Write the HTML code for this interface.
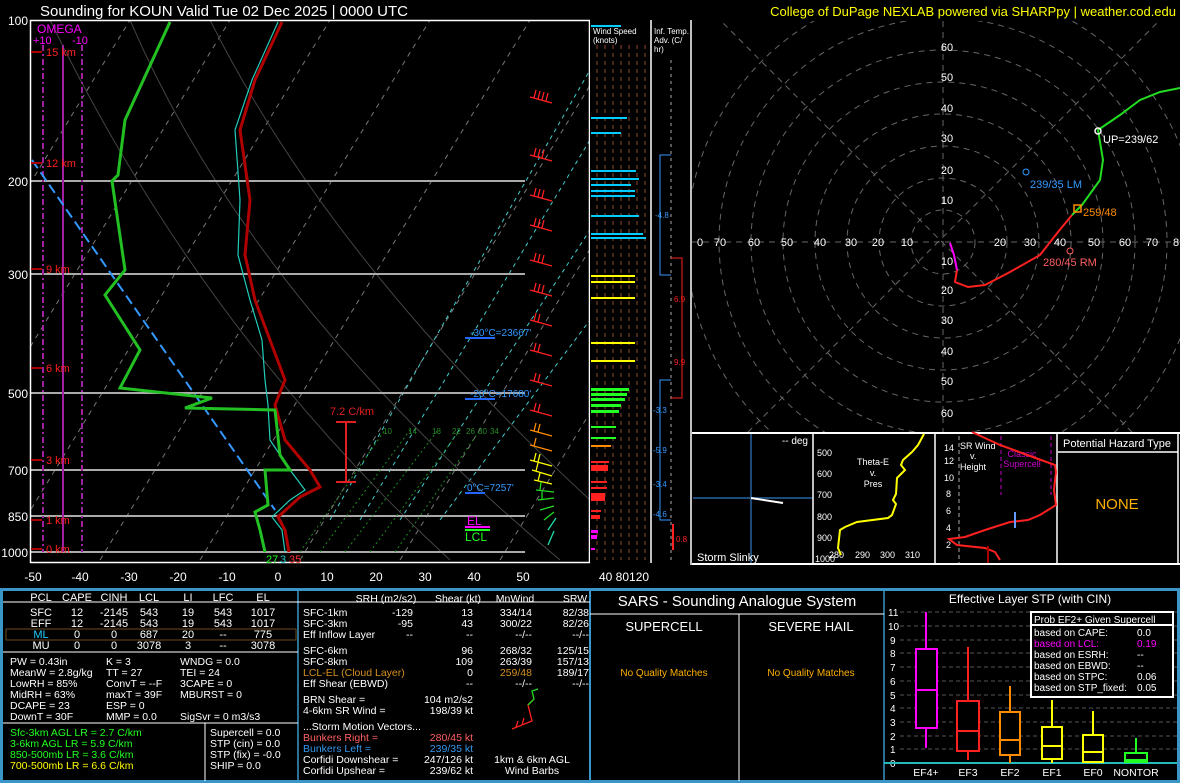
<!DOCTYPE html>
<html><head><meta charset="utf-8"><style>
html,body{margin:0;padding:0;background:#000;}
svg{display:block;font-family:"Liberation Sans",sans-serif;}
</style></head><body>
<svg width="1180" height="783" viewBox="0 0 1180 783" xmlns="http://www.w3.org/2000/svg">
<rect width="1180" height="783" fill="#000"/>
<text x="40" y="16" fill="#fff" font-size="15">Sounding for KOUN Valid  Tue 02 Dec 2025 | 0000 UTC</text>
<text x="1176" y="16" fill="#ffff00" font-size="13" text-anchor="end">College of DuPage NEXLAB powered via SHARPpy | weather.cod.edu</text>

<g>
<clipPath id="sk"><rect x="31" y="21" width="558" height="541"/></clipPath>
<g clip-path="url(#sk)">
 <g stroke="#777" stroke-width="1" stroke-dasharray="5,5">
  <line x1="-300" y1="560" x2="30" y2="20"/><line x1="-200" y1="560" x2="130" y2="20"/>
  <line x1="-100" y1="560" x2="230" y2="20"/><line x1="0" y1="560" x2="330" y2="20"/>
  <line x1="100" y1="560" x2="430" y2="20"/><line x1="200" y1="560" x2="530" y2="20"/>
  <line x1="300" y1="560" x2="630" y2="20"/><line x1="400" y1="560" x2="730" y2="20"/>
  <line x1="500" y1="560" x2="830" y2="20"/>
 </g>
 <g stroke="#4cc" stroke-width="1" stroke-dasharray="4,4">
  <line x1="330" y1="520" x2="590" y2="70"/><line x1="360" y1="520" x2="590" y2="140"/>
  <line x1="400" y1="520" x2="590" y2="230"/><line x1="440" y1="520" x2="590" y2="320"/>
 </g>
 <g stroke="#444" stroke-width="1" fill="none">
  <path d="M130 20 Q250 300 560 560"/><path d="M50 20 Q200 330 450 560"/><path d="M210 20 Q330 260 590 500"/>
 </g>
 <g stroke="#aaa" stroke-width="2">
  <line x1="31" y1="181" x2="525" y2="181"/><line x1="31" y1="274" x2="525" y2="274"/>
  <line x1="31" y1="393" x2="525" y2="393"/><line x1="31" y1="470" x2="525" y2="470"/>
  <line x1="31" y1="516" x2="525" y2="516"/><line x1="31" y1="552" x2="525" y2="552"/>
 </g>
 <line x1="63" y1="45" x2="63" y2="552" stroke="#a020a0" stroke-width="2"/>
 <line x1="43" y1="45" x2="43" y2="552" stroke="#a020a0" stroke-width="2" stroke-dasharray="6,3,2,3"/>
 <line x1="82" y1="45" x2="82" y2="552" stroke="#a020a0" stroke-width="2" stroke-dasharray="6,3,2,3"/>
 <line x1="32" y1="160" x2="275" y2="510" stroke="#3399ff" stroke-width="2" stroke-dasharray="10,5"/>
 <g stroke="#228b22" stroke-width="1" stroke-dasharray="2,3">
  <line x1="300" y1="552" x2="385" y2="430"/><line x1="320" y1="552" x2="410" y2="430"/><line x1="345" y1="552" x2="438" y2="430"/>
  <line x1="370" y1="552" x2="460" y2="430"/><line x1="395" y1="552" x2="480" y2="430"/>
 </g>
 <polyline fill="none" stroke="#2cb" stroke-width="1.2" points="285,552 282,530 272,517 290,500 305,490 290,470 270,440 268,405 265,380 262,340 250,300 238,255 240,200 235,130 252,80 278,22"/>
 <polyline fill="none" stroke="#b00000" stroke-width="3" points="289,552 285,530 278,517 300,497 320,487 310,470 285,440 275,405 285,380 270,340 255,300 245,255 250,200 240,130 255,80 282,22"/>
 <polyline fill="none" stroke="#22c022" stroke-width="3" points="265,552 260,530 255,512 268,505 265,470 290,470 280,455 275,410 185,408 212,398 120,388 140,350 105,295 125,270 112,181 118,175 125,120 170,22"/>
</g>
<rect x="30.5" y="20.5" width="559" height="542" fill="none" stroke="#fff" stroke-width="1.5"/>
<g fill="#fff" font-size="12" text-anchor="end">
 <text x="28" y="25">100</text><text x="28" y="186">200</text><text x="28" y="279">300</text>
 <text x="28" y="398">500</text><text x="28" y="475">700</text><text x="28" y="521">850</text><text x="28" y="557">1000</text>
</g>
<g fill="#fff" font-size="12" text-anchor="middle">
 <text x="33" y="581">-50</text><text x="80" y="581">-40</text><text x="129" y="581">-30</text><text x="178" y="581">-20</text>
 <text x="227" y="581">-10</text><text x="278" y="581">0</text><text x="327" y="581">10</text><text x="376" y="581">20</text>
 <text x="425" y="581">30</text><text x="474" y="581">40</text><text x="523" y="581">50</text>
</g>
<text x="599" y="581" fill="#fff" font-size="12">40  80120</text>
<text x="37" y="33" fill="#ff00ff" font-size="12">OMEGA</text>
<text x="33" y="44" fill="#ff00ff" font-size="11">+10</text><text x="72" y="44" fill="#ff00ff" font-size="11">-10</text>
<g fill="#ff2020" font-size="11">
 <text x="46" y="56">15 km</text><text x="46" y="167">12 km</text><text x="46" y="273">9 km</text>
 <text x="46" y="372">6 km</text><text x="46" y="464">3 km</text><text x="46" y="524">1 km</text><text x="46" y="553">0 km</text>
</g>
<g stroke="#a00" stroke-width="2"><line x1="31" y1="52" x2="42" y2="52"/><line x1="31" y1="163" x2="42" y2="163"/><line x1="31" y1="269" x2="42" y2="269"/><line x1="31" y1="368" x2="42" y2="368"/><line x1="31" y1="460" x2="42" y2="460"/><line x1="31" y1="520" x2="42" y2="520"/><line x1="31" y1="549" x2="42" y2="549"/></g>
<g stroke="#e02020" stroke-width="2"><line x1="346" y1="422" x2="346" y2="482"/><line x1="336" y1="422" x2="356" y2="422"/><line x1="336" y1="482" x2="356" y2="482"/></g>
<text x="330" y="415" fill="#e02020" font-size="11">7.2 C/km</text>
<g fill="#228b22" font-size="8"><text x="383" y="434">10</text><text x="408" y="434">14</text><text x="432" y="434">18</text><text x="452" y="434">22</text><text x="466" y="434">26</text><text x="478" y="434">30</text><text x="490" y="434">34</text></g>
<g fill="#3399ff" font-size="10"><text x="470" y="336">-30°C=23667'</text><text x="470" y="397">-20°C=17680'</text><text x="467" y="491">0°C=7257'</text></g>
<g stroke="#2266ff" stroke-width="2"><line x1="465" y1="338" x2="495" y2="338"/><line x1="465" y1="399" x2="495" y2="399"/><line x1="465" y1="493" x2="485" y2="493"/></g>
<text x="467" y="525" fill="#ff00ff" font-size="12">EL</text><line x1="465" y1="527" x2="490" y2="527" stroke="#ff00ff" stroke-width="2"/>
<text x="465" y="541" fill="#22ff22" font-size="12">LCL</text><line x1="465" y1="530" x2="490" y2="530" stroke="#22ff22" stroke-width="2"/>
<text x="266" y="563" fill="#22ff22" font-size="11">27</text><text x="280" y="563" fill="#22cccc" font-size="11">3</text><text x="289" y="563" fill="#ff3030" font-size="11">35</text>
<g stroke="#ff2020" stroke-width="1.3" fill="none">
 <path d="M530 97 l22 6 M534 98 l2 -8 M538 99 l2 -8 M542 100 l2 -8 M546 101 l2 -8"/>
 <path d="M530 155 l22 6 M534 156 l2 -8 M538 157 l2 -8 M542 158 l2 -8"/>
 <path d="M530 195 l22 6 M534 196 l2 -8 M538 197 l2 -8 M542 198 l2 -8"/>
 <path d="M530 225 l22 6 M534 226 l2 -8 M538 227 l2 -8 M542 228 l2 -8"/>
 <path d="M530 260 l22 6 M534 261 l2 -8 M538 262 l2 -8 M542 263 l2 -8"/>
 <path d="M530 290 l22 6 M534 291 l2 -8 M538 292 l2 -8 M542 293 l2 -8"/>
 <path d="M530 320 l22 6 M534 321 l2 -8 M538 322 l2 -8"/>
 <path d="M530 350 l22 6 M534 351 l2 -8 M538 352 l2 -8"/>
 <path d="M530 380 l22 6 M534 381 l2 -8 M538 382 l2 -8"/>
 <path d="M530 410 l22 6 M534 411 l2 -8 M538 412 l2 -8"/>
</g>
<g stroke="#ff8c00" stroke-width="1.3" fill="none"><path d="M530 430 l22 6 M534 431 l2 -8 M538 432 l2 -8"/><path d="M530 445 l22 6 M534 446 l2 -8"/></g>
<g stroke="#ffff00" stroke-width="1.3" fill="none"><path d="M530 460 l22 6 M534 461 l2 -8 M538 462 l2 -8"/><path d="M532 470 l20 6 M536 471 l2 -8"/><path d="M534 480 l18 4 M538 481 l2 -8"/></g>
<g stroke="#22dd22" stroke-width="1.3" fill="none"><path d="M536 490 l18 2 M540 490 l1 -8"/><path d="M538 500 l16 -2 M542 500 l0 -8"/><path d="M540 510 l14 -4"/><path d="M544 520 l10 -8"/></g>
<g stroke="#22ddaa" stroke-width="1.3" fill="none"><path d="M548 530 l8 -12"/><path d="M548 545 l6 -14"/></g>
</g>

<rect x="590" y="20" width="60" height="543" fill="#000"/>
<text x="593" y="34" fill="#fff" font-size="8">Wind Speed</text><text x="593" y="43" fill="#fff" font-size="8">(knots)</text>
<g stroke="#8b4a2b" stroke-width="1" stroke-dasharray="4,4"><line x1="597" y1="45" x2="597" y2="560"/><line x1="605" y1="45" x2="605" y2="560"/><line x1="613" y1="45" x2="613" y2="560"/><line x1="621" y1="45" x2="621" y2="560"/><line x1="629" y1="45" x2="629" y2="560"/><line x1="637" y1="45" x2="637" y2="560"/><line x1="645" y1="45" x2="645" y2="560"/></g>
<g fill="#00ccff"><rect x="591" y="25" width="30" height="2"/><rect x="591" y="117" width="36" height="2"/><rect x="591" y="132" width="30" height="2"/><rect x="591" y="170" width="45" height="2"/><rect x="591" y="178" width="48" height="2"/><rect x="591" y="184" width="40" height="2"/><rect x="591" y="190" width="44" height="2"/><rect x="591" y="195" width="44" height="2"/><rect x="591" y="215" width="48" height="2"/><rect x="591" y="233" width="52" height="2"/><rect x="591" y="237" width="55" height="2"/></g>
<g fill="#ffff00"><rect x="591" y="275" width="44" height="2"/><rect x="591" y="281" width="44" height="2"/><rect x="591" y="297" width="44" height="2"/><rect x="591" y="342" width="44" height="2"/><rect x="591" y="360" width="44" height="2"/></g>
<g fill="#22ff22"><rect x="591" y="388" width="38" height="3"/><rect x="591" y="393" width="36" height="3"/><rect x="591" y="398" width="34" height="3"/><rect x="591" y="404" width="30" height="3"/><rect x="591" y="410" width="28" height="3"/><rect x="591" y="426" width="25" height="2"/><rect x="591" y="437" width="25" height="2"/></g>
<g fill="#ff8c00"><rect x="591" y="445" width="20" height="2"/></g>
<g fill="#ff2020"><rect x="591" y="461" width="18" height="2"/><rect x="591" y="465" width="17" height="6"/><rect x="591" y="481" width="16" height="2"/><rect x="591" y="487" width="16" height="2"/><rect x="591" y="493" width="14" height="8"/><rect x="591" y="510" width="10" height="2"/><rect x="591" y="515" width="9" height="4"/></g>
<g fill="#ff00ff"><rect x="591" y="530" width="7" height="3"/><rect x="591" y="535" width="6" height="4"/><rect x="591" y="548" width="4" height="2"/></g>
<line x1="651" y1="20" x2="651" y2="563" stroke="#fff" stroke-width="1.5"/>
<text x="654" y="34" fill="#fff" font-size="8">Inf. Temp.</text><text x="654" y="43" fill="#fff" font-size="8">Adv. (C/</text><text x="654" y="52" fill="#fff" font-size="8">hr)</text>
<line x1="671" y1="60" x2="671" y2="560" stroke="#aaa" stroke-dasharray="3,4"/>
<path d="M671 155 h-11 v120 h11" fill="none" stroke="#3399ff"/><text x="655" y="218" fill="#3399ff" font-size="8">-4.8</text>
<path d="M671 258 h11 v140 h-11" fill="none" stroke="#ff2020"/><text x="674" y="302" fill="#ff2020" font-size="8">6.9</text><text x="674" y="365" fill="#ff2020" font-size="8">9.9</text>
<path d="M671 380 h-11 v140 h11" fill="none" stroke="#3399ff"/><text x="653" y="413" fill="#3399ff" font-size="8">-3.3</text><text x="653" y="453" fill="#3399ff" font-size="8">-5.9</text><text x="653" y="487" fill="#3399ff" font-size="8">-3.4</text><text x="653" y="517" fill="#3399ff" font-size="8">-4.6</text>
<line x1="673" y1="524" x2="673" y2="550" stroke="#ff2020" stroke-width="2"/><text x="676" y="542" fill="#ff2020" font-size="8">0.8</text>
<line x1="691" y1="20" x2="691" y2="565" stroke="#fff" stroke-width="1.5"/>

<g>
<clipPath id="hc"><rect x="692" y="21" width="488" height="411"/></clipPath>
<g clip-path="url(#hc)" fill="none" stroke="#666" stroke-dasharray="6,5">
 <circle cx="943" cy="242" r="32"/><circle cx="943" cy="242" r="64"/><circle cx="943" cy="242" r="96"/><circle cx="943" cy="242" r="128"/><circle cx="943" cy="242" r="160"/><circle cx="943" cy="242" r="192"/><circle cx="943" cy="242" r="224"/><circle cx="943" cy="242" r="256"/>
 <line x1="692" y1="242" x2="1180" y2="242"/><line x1="943" y1="21" x2="943" y2="432"/>
 <line x1="700" y1="0" x2="1180" y2="480"/><line x1="1180" y1="0" x2="700" y2="480"/>
</g>
<g fill="#fff" font-size="11" text-anchor="middle">
 <text x="947" y="51">60</text><text x="947" y="81">50</text><text x="947" y="112">40</text><text x="947" y="142">30</text><text x="947" y="174">20</text><text x="947" y="204">10</text>
 <text x="947" y="265">10</text><text x="947" y="294">20</text><text x="947" y="324">30</text><text x="947" y="355">40</text><text x="947" y="385">50</text><text x="947" y="417">60</text>
 <text x="700" y="246">0</text><text x="720" y="246">70</text><text x="754" y="246">60</text><text x="787" y="246">50</text><text x="820" y="246">40</text><text x="851" y="246">30</text><text x="878" y="246">20</text><text x="907" y="246">10</text>
 <text x="1000" y="246">20</text><text x="1030" y="246">30</text><text x="1060" y="246">40</text><text x="1094" y="246">50</text><text x="1125" y="246">60</text><text x="1152" y="246">70</text><text x="1176" y="246">8</text>
</g>
<polyline fill="none" stroke="#ff00ff" stroke-width="2" points="950,243 954,255 957,270"/>
<polyline fill="none" stroke="#ff2020" stroke-width="2" points="957,270 955,282 968,287 985,285 1010,272 1040,255 1058,232 1072,215"/>
<polyline fill="none" stroke="#22dd22" stroke-width="2" points="1072,215 1082,205 1100,180 1103,160 1098,130 1120,115 1140,100 1160,92 1180,88"/>
<circle cx="1098" cy="131" r="3" fill="none" stroke="#fff" stroke-width="1.5"/><text x="1103" y="143" fill="#fff" font-size="11">UP=239/62</text>
<circle cx="1026" cy="172" r="3" fill="none" stroke="#3399ff"/><text x="1030" y="188" fill="#3399ff" font-size="11">239/35 LM</text>
<rect x="1074" y="205" width="7" height="7" fill="none" stroke="#ff8c00" stroke-width="1.5"/><text x="1083" y="216" fill="#ff8c00" font-size="11">259/48</text>
<circle cx="1070" cy="251" r="3" fill="none" stroke="#ff6060"/><text x="1043" y="266" fill="#ff6060" font-size="11">280/45 RM</text>
</g>
<rect x="692" y="432" width="488" height="2" fill="#fff"/>
<line x1="692" y1="564" x2="1180" y2="564" stroke="#fff" stroke-width="2"/>
<line x1="813" y1="432" x2="813" y2="565" stroke="#fff" stroke-width="1.5"/>
<line x1="935" y1="432" x2="935" y2="565" stroke="#fff" stroke-width="1.5"/>
<line x1="1057" y1="432" x2="1057" y2="565" stroke="#fff" stroke-width="1.5"/>
<line x1="1178" y1="432" x2="1178" y2="565" stroke="#fff" stroke-width="1.5"/>
<line x1="751" y1="434" x2="751" y2="563" stroke="#1e4a7a" stroke-width="2"/><line x1="693" y1="498" x2="812" y2="498" stroke="#1e4a7a" stroke-width="2"/>
<line x1="751" y1="498" x2="783" y2="503" stroke="#fff" stroke-width="2"/>
<text x="808" y="444" fill="#fff" font-size="10" text-anchor="end">-- deg</text>
<text x="697" y="561" fill="#fff" font-size="11">Storm Slinky</text>
<g fill="#fff" font-size="9"><text x="817" y="456">500</text><text x="817" y="477">600</text><text x="817" y="498">700</text><text x="817" y="520">800</text><text x="817" y="541">900</text><text x="815" y="562">1000</text><text x="829" y="558">280</text><text x="855" y="558">290</text><text x="880" y="558">300</text><text x="905" y="558">310</text></g>
<g fill="#fff" font-size="9" text-anchor="middle"><text x="873" y="465">Theta-E</text><text x="873" y="476">v.</text><text x="873" y="487">Pres</text></g>
<polyline fill="none" stroke="#ffff00" stroke-width="2" points="924,434 918,445 912,452 903,460 901,465 905,470 897,478 896,494 893,500 896,504 892,515 888,518 857,522 845,527 840,530 838,548 841,555"/>
<g fill="#fff" font-size="9"><text x="944" y="451">14</text><text x="944" y="464">12</text><text x="944" y="481">10</text><text x="946" y="497">8</text><text x="946" y="514">6</text><text x="946" y="531">4</text><text x="946" y="548">2</text><text x="960" y="449">SR Wind</text><text x="970" y="459">v.</text><text x="960" y="470">Height</text></g>
<line x1="959" y1="436" x2="959" y2="563" stroke="#aaa" stroke-dasharray="4,3"/>
<line x1="1001" y1="436" x2="1001" y2="495" stroke="#800080" stroke-dasharray="4,3" stroke-width="1.5"/><line x1="1051" y1="436" x2="1051" y2="495" stroke="#800080" stroke-dasharray="4,3" stroke-width="1.5"/>
<text x="1022" y="457" fill="#cc00cc" font-size="9" text-anchor="middle">Classic</text><text x="1022" y="467" fill="#cc00cc" font-size="9" text-anchor="middle">Supercell</text>
<polyline fill="none" stroke="#ff2020" stroke-width="2" points="972,432 1000,445 1030,456 1055,465 1056,472 1054,490 1056,505 1040,515 1028,520 1010,522 985,530 965,537 949,539 957,545 985,548 995,552 1000,560"/>
<line x1="1015" y1="512" x2="1015" y2="528" stroke="#6699ff" stroke-width="2"/>
<line x1="988" y1="546" x2="988" y2="563" stroke="#a00" stroke-width="2"/>
<text x="1117" y="447" fill="#fff" font-size="11" text-anchor="middle">Potential Hazard Type</text>
<line x1="1058" y1="452" x2="1178" y2="452" stroke="#fff" stroke-width="1.5"/>
<text x="1117" y="509" fill="#ffb000" font-size="15" text-anchor="middle">NONE</text>

<rect x="1.5" y="589.5" width="1177" height="192" fill="none" stroke="#3a96c8" stroke-width="3"/>
<line x1="298" y1="590" x2="298" y2="782" stroke="#3a96c8" stroke-width="1.5"/>
<line x1="590" y1="590" x2="590" y2="782" stroke="#3a96c8" stroke-width="2"/>
<line x1="884" y1="590" x2="884" y2="782" stroke="#3a96c8" stroke-width="1.5"/>
<g stroke="#fff" stroke-width="1"><line x1="3" y1="602" x2="298" y2="602"/><line x1="3" y1="652" x2="298" y2="652"/><line x1="3" y1="723" x2="298" y2="723"/><line x1="205" y1="723" x2="205" y2="781"/><line x1="298" y1="602" x2="590" y2="602"/>
<line x1="590" y1="614" x2="884" y2="614"/><line x1="739" y1="614" x2="739" y2="781"/></g>
<rect x="6" y="629" width="290" height="11" fill="none" stroke="#6b4a1e"/>
<g fill="#fff" font-size="11" text-anchor="middle">
 <text x="41" y="601">PCL</text><text x="77" y="601">CAPE</text><text x="114" y="601">CINH</text><text x="149" y="601">LCL</text><text x="188" y="601">LI</text><text x="223" y="601">LFC</text><text x="263" y="601">EL</text>
 <text x="41" y="616">SFC</text><text x="77" y="616">12</text><text x="114" y="616">-2145</text><text x="149" y="616">543</text><text x="188" y="616">19</text><text x="223" y="616">543</text><text x="263" y="616">1017</text>
 <text x="41" y="627">EFF</text><text x="77" y="627">12</text><text x="114" y="627">-2145</text><text x="149" y="627">543</text><text x="188" y="627">19</text><text x="223" y="627">543</text><text x="263" y="627">1017</text>
 <text x="41" y="638" fill="#22ccff">ML</text><text x="77" y="638">0</text><text x="114" y="638">0</text><text x="149" y="638">687</text><text x="188" y="638">20</text><text x="223" y="638">--</text><text x="263" y="638">775</text>
 <text x="41" y="649">MU</text><text x="77" y="649">0</text><text x="114" y="649">0</text><text x="149" y="649">3078</text><text x="188" y="649">3</text><text x="223" y="649">--</text><text x="263" y="649">3078</text>
</g>
<g fill="#fff" font-size="10.5">
 <text x="10" y="665">PW = 0.43in</text><text x="106" y="665">K = 3</text><text x="180" y="665">WNDG = 0.0</text>
 <text x="10" y="676">MeanW = 2.8g/kg</text><text x="106" y="676">TT = 27</text><text x="180" y="676">TEI = 24</text>
 <text x="10" y="687">LowRH = 85%</text><text x="106" y="687">ConvT = --F</text><text x="180" y="687">3CAPE = 0</text>
 <text x="10" y="698">MidRH = 63%</text><text x="106" y="698">maxT = 39F</text><text x="180" y="698">MBURST = 0</text>
 <text x="10" y="709">DCAPE = 23</text><text x="106" y="709">ESP = 0</text>
 <text x="10" y="720">DownT = 30F</text><text x="106" y="720">MMP = 0.0</text><text x="180" y="720">SigSvr = 0 m3/s3</text>
 <text x="10" y="736" fill="#22ff22">Sfc-3km AGL LR = 2.7 C/km</text>
 <text x="10" y="747" fill="#22ff22">3-6km AGL LR = 5.9 C/km</text>
 <text x="10" y="758" fill="#22ff22">850-500mb LR = 3.6 C/km</text>
 <text x="10" y="769" fill="#ffff00">700-500mb LR = 6.6 C/km</text>
 <text x="210" y="736">Supercell = 0.0</text><text x="210" y="747">STP (cin) = 0.0</text><text x="210" y="758">STP (fix) = -0.0</text><text x="210" y="769">SHIP = 0.0</text>
</g>
<g fill="#fff" font-size="10.5">
 <text x="386" y="602" text-anchor="middle">SRH (m2/s2)</text><text x="458" y="602" text-anchor="middle">Shear (kt)</text><text x="515" y="602" text-anchor="middle">MnWind</text><text x="575" y="602" text-anchor="middle">SRW</text>
 <text x="303" y="616">SFC-1km</text><text x="303" y="627">SFC-3km</text><text x="303" y="638">Eff Inflow Layer</text>
 <text x="303" y="654">SFC-6km</text><text x="303" y="665">SFC-8km</text><text x="303" y="676" fill="#d4901e">LCL-EL (Cloud Layer)</text><text x="303" y="687">Eff Shear (EBWD)</text>
 <text x="303" y="703">BRN Shear =</text><text x="303" y="714">4-6km SR Wind =</text><text x="303" y="730">...Storm Motion Vectors...</text>
 <text x="303" y="741" fill="#ff6060">Bunkers Right =</text><text x="303" y="752" fill="#3399ee">Bunkers Left =</text><text x="303" y="763">Corfidi Downshear =</text><text x="303" y="774">Corfidi Upshear =</text>
</g>
<g fill="#fff" font-size="10.5" text-anchor="end">
 <text x="413" y="616">-129</text><text x="473" y="616">13</text><text x="532" y="616">334/14</text><text x="589" y="616">82/38</text>
 <text x="413" y="627">-95</text><text x="473" y="627">43</text><text x="532" y="627">300/22</text><text x="589" y="627">82/26</text>
 <text x="413" y="638">--</text><text x="473" y="638">--</text><text x="532" y="638">--/--</text><text x="589" y="638">--/--</text>
 <text x="473" y="654">96</text><text x="532" y="654">268/32</text><text x="589" y="654">125/15</text>
 <text x="473" y="665">109</text><text x="532" y="665">263/39</text><text x="589" y="665">157/13</text>
 <text x="473" y="676">0</text><text x="532" y="676" fill="#d4901e">259/48</text><text x="589" y="676">189/17</text>
 <text x="473" y="687">--</text><text x="532" y="687">--/--</text><text x="589" y="687">--/--</text>
 <text x="473" y="703">104 m2/s2</text><text x="473" y="714">198/39 kt</text>
 <text x="473" y="741" fill="#ff6060">280/45 kt</text><text x="473" y="752" fill="#3399ee">239/35 kt</text><text x="473" y="763">247/126 kt</text><text x="473" y="774">239/62 kt</text>
</g>
<g fill="#fff" font-size="10.5" text-anchor="middle"><text x="532" y="763">1km &amp; 6km AGL</text><text x="532" y="774">Wind Barbs</text></g>
<path d="M512 729 l20 -8 l-4 -16 l6 -6 M516 727 l2 -6 M522 725 l2 -7" fill="none" stroke="#ff2020" stroke-width="1.3"/>
<path d="M528 705 l6 -6 l-2 -8 l6 -2" fill="none" stroke="#22dd22" stroke-width="1.3"/>
<g fill="#fff" text-anchor="middle"><text x="737" y="606" font-size="15">SARS - Sounding Analogue System</text><text x="664" y="631" font-size="13">SUPERCELL</text><text x="811" y="631" font-size="13">SEVERE HAIL</text></g>
<g fill="#ffb000" font-size="10" text-anchor="middle"><text x="664" y="676">No Quality Matches</text><text x="811" y="676">No Quality Matches</text></g>
<text x="1030" y="603" fill="#fff" font-size="12" text-anchor="middle">Effective Layer STP (with CIN)</text>
<g stroke="#555" stroke-dasharray="4,3"><line x1="900" y1="612" x2="1177" y2="612"/><line x1="900" y1="626" x2="1177" y2="626"/><line x1="900" y1="640" x2="1177" y2="640"/><line x1="900" y1="653" x2="1177" y2="653"/><line x1="900" y1="667" x2="1177" y2="667"/><line x1="900" y1="681" x2="1177" y2="681"/><line x1="900" y1="695" x2="1177" y2="695"/><line x1="900" y1="708" x2="1177" y2="708"/><line x1="900" y1="722" x2="1177" y2="722"/><line x1="900" y1="736" x2="1177" y2="736"/><line x1="900" y1="749" x2="1177" y2="749"/></g>
<g fill="#fff" font-size="10"><text x="888" y="616">11</text><text x="888" y="630">10</text><text x="890" y="644">9</text><text x="890" y="657">8</text><text x="890" y="671">7</text><text x="890" y="685">6</text><text x="890" y="699">5</text><text x="890" y="712">4</text><text x="890" y="726">3</text><text x="890" y="740">2</text><text x="890" y="753">1</text><text x="890" y="767">0</text></g>
<line x1="884" y1="763" x2="1177" y2="763" stroke="#22bbbb" stroke-width="2"/>
<g fill="none" stroke-width="2">
 <g stroke="#ff00ff"><line x1="926" y1="748" x2="926" y2="612"/><rect x="916" y="649" width="21" height="79" fill="#000"/><line x1="916" y1="690" x2="937" y2="690"/></g>
 <g stroke="#ff2020"><line x1="968" y1="760" x2="968" y2="647"/><rect x="957" y="701" width="22" height="50" fill="#000"/><line x1="957" y1="731" x2="979" y2="731"/></g>
 <g stroke="#ff8c00"><line x1="1010" y1="763" x2="1010" y2="686"/><rect x="1000" y="712" width="20" height="43" fill="#000"/><line x1="1000" y1="740" x2="1020" y2="740"/></g>
 <g stroke="#ffff00"><line x1="1052" y1="763" x2="1052" y2="700"/><rect x="1042" y="727" width="20" height="32" fill="#000"/><line x1="1042" y1="746" x2="1062" y2="746"/></g>
 <g stroke="#ffff00"><line x1="1093" y1="763" x2="1093" y2="711"/><rect x="1083" y="735" width="20" height="27" fill="#000"/><line x1="1083" y1="752" x2="1103" y2="752"/></g>
 <g stroke="#22ff22"><line x1="1136" y1="763" x2="1136" y2="738"/><rect x="1125" y="753" width="22" height="9" fill="#000"/><line x1="1125" y1="760" x2="1147" y2="760"/></g>
</g>
<g fill="#fff" font-size="10.5" text-anchor="middle"><text x="926" y="776">EF4+</text><text x="968" y="776">EF3</text><text x="1010" y="776">EF2</text><text x="1052" y="776">EF1</text><text x="1093" y="776">EF0</text><text x="1136" y="776">NONTOR</text></g>
<rect x="1031" y="612" width="142" height="85" fill="#000" stroke="#fff" stroke-width="2"/>
<line x1="1031" y1="625" x2="1173" y2="625" stroke="#fff" stroke-width="2"/>
<g fill="#fff" font-size="10"><text x="1034" y="623">Prob EF2+ Given Supercell</text>
<text x="1034" y="636">based on CAPE:</text><text x="1137" y="636">0.0</text>
<text x="1034" y="647" fill="#ff00ff">based on LCL:</text><text x="1137" y="647" fill="#ff00ff">0.19</text>
<text x="1034" y="658">based on ESRH:</text><text x="1137" y="658">--</text>
<text x="1034" y="669">based on EBWD:</text><text x="1137" y="669">--</text>
<text x="1034" y="680">based on STPC:</text><text x="1137" y="680">0.06</text>
<text x="1034" y="691">based on STP_fixed:</text><text x="1137" y="691">0.05</text></g>
</svg>
</body></html>
